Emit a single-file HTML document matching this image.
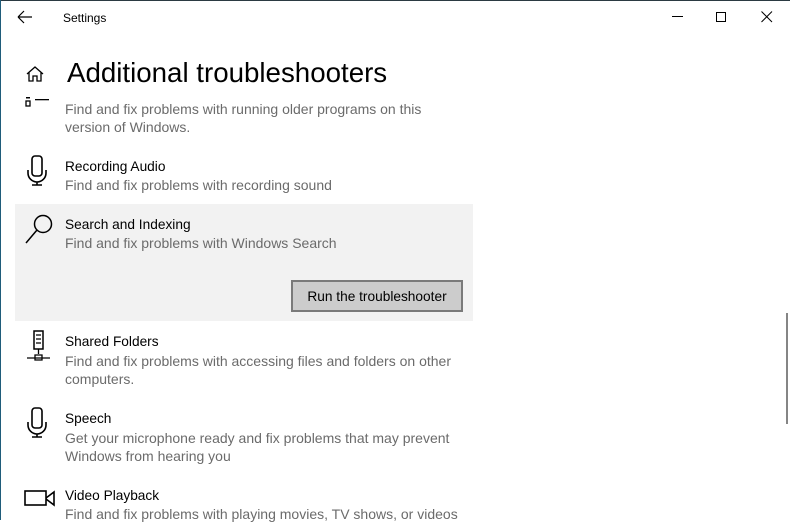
<!DOCTYPE html>
<html><head><meta charset="utf-8"><style>
*{margin:0;padding:0;box-sizing:border-box}
body{width:790px;height:520px;overflow:hidden;background:#fff;font-family:"Liberation Sans",sans-serif;position:relative;color:#000}
.a{position:absolute;white-space:nowrap}
.t{font-size:13.7px;color:#000}
.d{font-size:14px;color:#6b6b6b;line-height:18px}
svg{position:absolute}
</style></head><body>
<div class="a" style="left:0;top:0;width:790px;height:1px;background:#2b3a42"></div>
<div class="a" style="left:0;top:0;width:1px;height:520px;background:#1f5c7a"></div>
<svg style="left:17px;top:10px" width="16" height="14"><path d="M1 7H15M1 7L7 1M1 7L7 13" stroke="#000" stroke-width="1.2" fill="none"/></svg>
<div class="a" style="left:63px;top:11px;font-size:12px">Settings</div>
<svg style="left:672px;top:16px" width="12" height="2"><rect width="11" height="1" fill="#000"/></svg>
<svg style="left:716px;top:12px" width="11" height="11"><rect x="0.5" y="0.5" width="9" height="9" stroke="#000" fill="none"/></svg>
<svg style="left:761px;top:11px" width="12" height="12"><path d="M0.5 0.5L11 11M11 0.5L0.5 11" stroke="#000" fill="none"/></svg>
<svg style="left:26px;top:65px" width="18" height="18"><path d="M1 9L9 2L17 9M3 7V16H7V11H11V16H15V7" stroke="#000" stroke-width="1.3" fill="none"/></svg>
<div class="a" style="left:67px;top:57px;font-size:27.7px;color:#000">Additional troubleshooters</div>
<svg style="left:25px;top:96px" width="26" height="12"><rect x="1" y="1" width="4" height="1.5" fill="#000"/><rect x="1" y="5" width="4" height="5" stroke="#000" stroke-width="1.3" fill="none"/><rect x="10" y="3" width="14" height="1.3" fill="#000"/></svg>
<div class="a d" style="left:65px;top:100px">Find and fix problems with running older programs on this<br>version of Windows.</div>
<svg style="left:27px;top:155px" width="24" height="32"><rect x="5" y="1" width="10" height="20" rx="3" stroke="#000" stroke-width="1.6" fill="none"/><path d="M1 15V18A9 9 0 0 0 19 18V15M10 27V30M5 30H15" stroke="#000" stroke-width="1.6" fill="none"/></svg>
<div class="a t" style="left:65px;top:159px">Recording Audio</div>
<div class="a d" style="left:65px;top:176px">Find and fix problems with recording sound</div>
<div class="a" style="left:15px;top:204px;width:458px;height:117px;background:#f2f2f2"></div>
<svg style="left:24px;top:213px" width="32" height="32"><circle cx="19" cy="11" r="8.5" stroke="#000" stroke-width="1.5" fill="none"/><path d="M13 17L2 30" stroke="#000" stroke-width="1.5"/></svg>
<div class="a t" style="left:65px;top:217px">Search and Indexing</div>
<div class="a d" style="left:65px;top:234px">Find and fix problems with Windows Search</div>
<div class="a" style="left:291px;top:280px;width:172px;height:32px;background:#cccccc;border:2px solid #7a7a7a;font-size:13.7px;text-align:center;line-height:29px">Run the troubleshooter</div>
<svg style="left:25px;top:330px" width="26" height="32"><rect x="9" y="1" width="9" height="18" stroke="#000" stroke-width="1.5" fill="none"/><path d="M11 5H16M11 9H16M11 13H16M13.5 19V24M2 28H25M10 25H17V30H10Z" stroke="#000" stroke-width="1.3" fill="none"/></svg>
<div class="a t" style="left:65px;top:334px">Shared Folders</div>
<div class="a d" style="left:65px;top:352px">Find and fix problems with accessing files and folders on other<br>computers.</div>
<svg style="left:27px;top:407px" width="24" height="32"><rect x="5" y="1" width="10" height="20" rx="3" stroke="#000" stroke-width="1.6" fill="none"/><path d="M1 15V18A9 9 0 0 0 19 18V15M10 27V30M5 30H15" stroke="#000" stroke-width="1.6" fill="none"/></svg>
<div class="a t" style="left:65px;top:411px">Speech</div>
<div class="a d" style="left:65px;top:429px">Get your microphone ready and fix problems that may prevent<br>Windows from hearing you</div>
<svg style="left:24px;top:489px" width="32" height="20"><rect x="1" y="2" width="21" height="14" stroke="#000" stroke-width="1.6" fill="none"/><path d="M22 9L30 3V16L22 10" stroke="#000" stroke-width="1.6" fill="none"/></svg>
<div class="a t" style="left:65px;top:488px">Video Playback</div>
<div class="a d" style="left:65px;top:505px">Find and fix problems with playing movies, TV shows, or videos</div>
<div class="a" style="left:786px;top:313px;width:2px;height:111px;background:#858585"></div>
</body></html>
